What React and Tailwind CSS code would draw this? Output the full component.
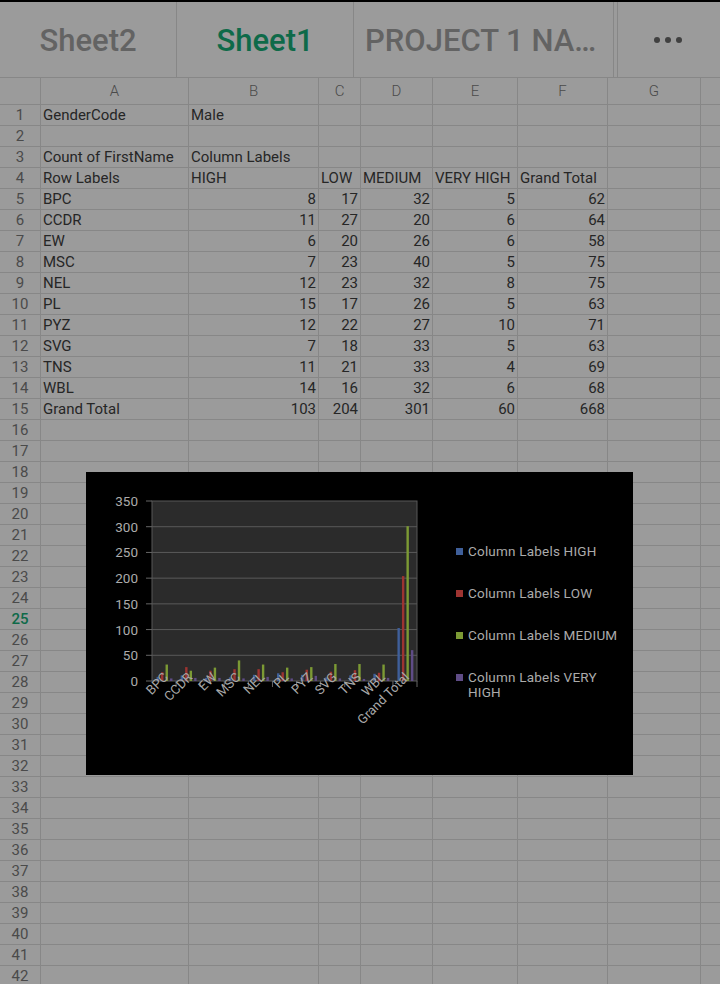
import { useState } from 'react';

const cols = [
  { key: 'A', w: 'w-[148px]' },
  { key: 'B', w: 'w-[130px]' },
  { key: 'C', w: 'w-[42px]' },
  { key: 'D', w: 'w-[72px]' },
  { key: 'E', w: 'w-[85px]' },
  { key: 'F', w: 'w-[90px]' },
  { key: 'G', w: 'w-[93px]' },
  { key: 'H', w: 'w-[60px]' },
];

const data = [
  ['GenderCode', 'Male'],
  [],
  ['Count of FirstName', 'Column Labels'],
  ['Row Labels', 'HIGH', 'LOW', 'MEDIUM', 'VERY HIGH', 'Grand Total'],
  ['BPC', 8, 17, 32, 5, 62],
  ['CCDR', 11, 27, 20, 6, 64],
  ['EW', 6, 20, 26, 6, 58],
  ['MSC', 7, 23, 40, 5, 75],
  ['NEL', 12, 23, 32, 8, 75],
  ['PL', 15, 17, 26, 5, 63],
  ['PYZ', 12, 22, 27, 10, 71],
  ['SVG', 7, 18, 33, 5, 63],
  ['TNS', 11, 21, 33, 4, 69],
  ['WBL', 14, 16, 32, 6, 68],
  ['Grand Total', 103, 204, 301, 60, 668],
];

const chartCats = ['BPC', 'CCDR', 'EW', 'MSC', 'NEL', 'PL', 'PYZ', 'SVG', 'TNS', 'WBL', 'Grand Total'];
const series = [
  { name: 'Column Labels HIGH', color: '#3f5f9a', off: -7.5, idx: 1 },
  { name: 'Column Labels LOW', color: '#9e3431', off: -3, idx: 2 },
  { name: 'Column Labels MEDIUM', color: '#7c9a34', off: 1.5, idx: 3 },
  { name: 'Column Labels VERY HIGH', color: '#5f4c86', off: 6, idx: 4 },
];

const PX = 66;
const PY = 29;
const PW = 265;
const PH = 180;

// Column chart drawn over the sheet
const Chart = () => {
  const step = PW / chartCats.length;
  return (
    <div className="absolute left-[86px] top-[472px] w-[547px] h-[303px] bg-black flex">
      <svg width="360" height="303" className="shrink-0">
        <rect x={PX} y={PY} width={PW} height={PH} fill="#2b2b2b" stroke="#585858" strokeWidth="1" />
        {[1, 2, 3, 4, 5, 6].map(i => (
          <line key={i} x1={PX} x2={PX + PW} y1={PY + PH - (i * PH) / 7} y2={PY + PH - (i * PH) / 7} stroke="#5a5a5a" strokeWidth="1" />
        ))}
        {[0, 1, 2, 3, 4, 5, 6, 7].map(i => (
          <g key={i}>
            <line x1={PX - 6} x2={PX} y1={PY + PH - (i * PH) / 7} y2={PY + PH - (i * PH) / 7} stroke="#666" strokeWidth="1" />
            <text x={PX - 14} y={PY + PH - (i * PH) / 7 + 5} textAnchor="end" fontSize="13.5" fill="#ababab" fontFamily="Roboto, sans-serif">
              {i * 50}
            </text>
          </g>
        ))}
        {chartCats.map((c, i) => (
          <line key={c} x1={PX + (i + 1) * step} x2={PX + (i + 1) * step} y1={PY + PH} y2={PY + PH + 6} stroke="#666" strokeWidth="1" />
        ))}
        {chartCats.map((c, i) => {
          const cx = PX + i * step + step / 2;
          const row = data[4 + i];
          return (
            <g key={c}>
              {series.map(s => {
                const h = (row[s.idx] / 350) * PH;
                return <rect key={s.name} x={cx + s.off} y={PY + PH - h} width="2.4" height={h} fill={s.color} />;
              })}
            </g>
          );
        })}
        {chartCats.map((c, i) => {
          const cx = PX + i * step + step / 2 + 5;
          const y = PY + PH - 3;
          return (
            <text key={c} x={cx} y={y} textAnchor="end" fontSize="13" fill="#a8a8a8" fontFamily="Roboto, sans-serif" transform={`rotate(-45 ${cx} ${y})`}>
              {c}
            </text>
          );
        })}
      </svg>
      <div className="flex flex-col gap-[27px] pt-[72px] pl-[10px] text-[13.5px] leading-[15px] tracking-[0.2px] text-[#ababab]">
        {series.map(s => (
          <div key={s.name} className="flex items-start gap-[5px]">
            <span className="w-[7px] h-[7px] mt-[4px] shrink-0" style={{ backgroundColor: s.color }} />
            <span className="w-[155px]">{s.name}</span>
          </div>
        ))}
      </div>
    </div>
  );
};

export default function App() {
  const [activeSheet] = useState('Sheet1');
  const rowCount = 42;

  return (
    <div className="relative w-[720px] h-[984px] overflow-hidden bg-[#9b9b9b] font-['Roboto',sans-serif] text-[#262626]">
      <div className="h-[2px] bg-black" />
      {/* Sheet tabs */}
      <div className="flex h-[76px] border-b border-[#878787]">
        <div className="w-[177px] border-r border-[#878787] flex items-center justify-center pt-[3px] text-[31px] font-medium text-[#636363]">Sheet2</div>
        <div className={`w-[177px] border-r border-[#878787] flex items-center justify-center pt-[3px] text-[31px] font-medium ${activeSheet === 'Sheet1' ? 'text-[#0e6a49]' : 'text-[#636363]'}`}>Sheet1</div>
        <div className="w-[260px] border-r border-[#878787] flex items-center px-[11px] pt-[3px] text-[31px] font-medium text-[#636363] whitespace-nowrap">
          PROJECT 1 NA…
        </div>
        <div className="w-[3px]" />
        <div className="flex-1 border-l border-[#878787] flex items-center justify-center gap-[5px] pr-[2px] pt-[1px]">
          <span className="w-[6px] h-[6px] rounded-full bg-[#404040]" />
          <span className="w-[6px] h-[6px] rounded-full bg-[#404040]" />
          <span className="w-[6px] h-[6px] rounded-full bg-[#404040]" />
        </div>
      </div>
      {/* Column headers */}
      <div className="flex h-[27px] border-b border-[#878787]">
        <div className="w-[41px] shrink-0 border-r border-[#878787]" />
        {cols.map(c => (
          <div key={c.key} className={`${c.w} shrink-0 border-r border-[#878787] flex items-center justify-center text-[15px] font-light text-[#4a4a4a]`}>
            {c.key === 'H' ? '' : c.key}
          </div>
        ))}
      </div>
      {/* Rows */}
      {Array.from({ length: rowCount }, (_, r) => {
        const row = data[r] || [];
        return (
          <div key={r} className="flex h-[21px] border-b border-[#878787]">
            <div className={`w-[41px] shrink-0 border-r border-[#878787] flex items-center justify-center text-[15px] ${r + 1 === 25 ? 'text-[#0e6a49] font-medium' : 'text-[#4a4a4a]'}`}>
              {r + 1}
            </div>
            {cols.map((c, ci) => {
              const v = row[ci];
              const isNum = typeof v === 'number';
              return (
                <div key={c.key} className={`${c.w} shrink-0 border-r border-[#878787] flex items-center text-[15px] whitespace-nowrap px-[2px] ${isNum ? 'justify-end' : 'justify-start overflow-visible'}`}>
                  {v !== undefined ? <span className="relative z-10">{v}</span> : null}
                </div>
              );
            })}
          </div>
        );
      })}
      <Chart />
    </div>
  );
}
